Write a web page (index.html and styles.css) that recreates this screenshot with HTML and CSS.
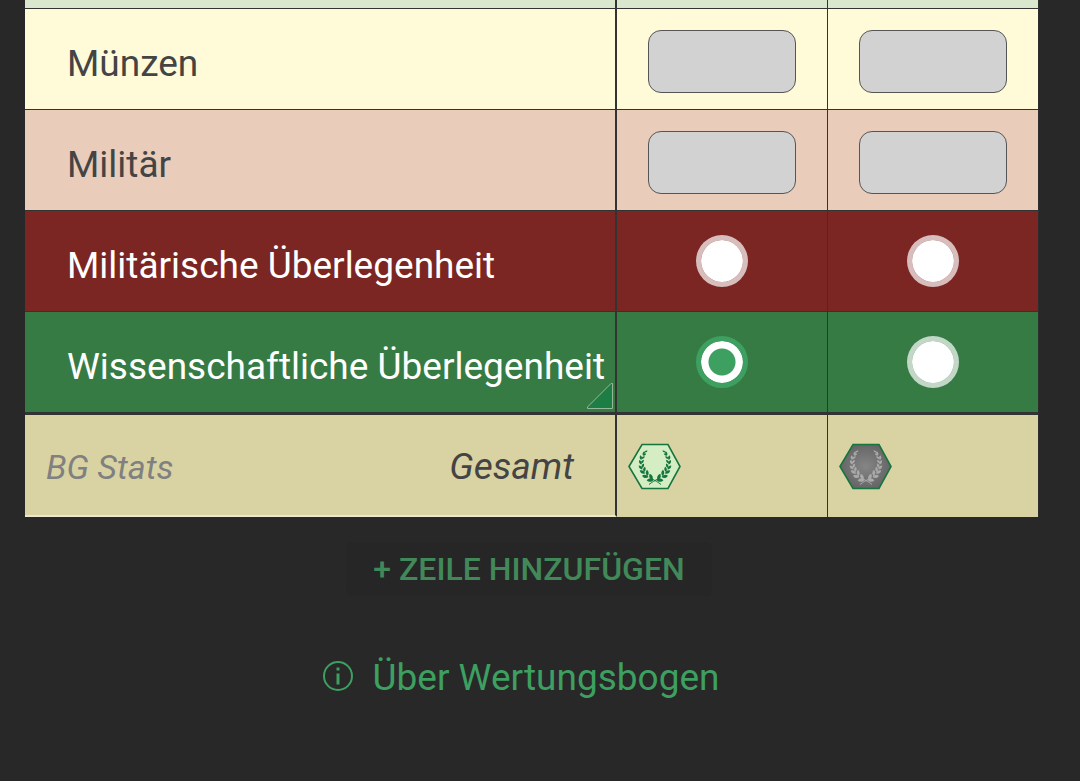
FILE: index.html
```html
<!DOCTYPE html>
<html lang="de">
<head>
<meta charset="utf-8">
<meta name="viewport" content="width=device-width, initial-scale=1">
<title>Wertungsbogen</title>
<link rel="stylesheet" href="styles.css">
</head>
<body>
<svg class="defs" aria-hidden="true">
  <defs>
    <path id="leaf" d="M0 0C-2-1.800-2-4.200 0-6C1.800-4.200 1.800-1.800 0 0Z"/>
    <g id="branch">
      <path class="stem" d="M33 41.500C30 39 27 37.500 24 36"/>
      <use href="#leaf" transform="translate(24.500 37) rotate(-24) scale(1.150)"/>
      <use href="#leaf" transform="translate(25.500 37) rotate(-92) scale(1.150)"/>
      <use href="#leaf" transform="translate(19.500 33) rotate(-4) scale(1.050)"/>
      <use href="#leaf" transform="translate(20.500 34) rotate(-78) scale(1.100)"/>
      <use href="#leaf" transform="translate(16 29) rotate(10) scale(.9)"/>
      <use href="#leaf" transform="translate(17 30.500) rotate(-60)"/>
      <use href="#leaf" transform="translate(14 25) rotate(22) scale(.8)"/>
      <use href="#leaf" transform="translate(14.500 26.500) rotate(-44) scale(.9)"/>
      <use href="#leaf" transform="translate(13.200 20.500) rotate(35) scale(.75)"/>
      <use href="#leaf" transform="translate(13.500 21.500) rotate(-26) scale(.85)"/>
      <use href="#leaf" transform="translate(13.500 16) rotate(50) scale(.7)"/>
      <use href="#leaf" transform="translate(13.200 17) rotate(-8) scale(.8)"/>
      <use href="#leaf" transform="translate(15 12.500) rotate(62) scale(.6)"/>
      <use href="#leaf" transform="translate(15 12.500) rotate(20) scale(.75)"/>
      <use href="#leaf" transform="translate(16.500 9.500) rotate(58) scale(.6)"/>
    </g>
    <symbol id="laurel" viewBox="0 0 54 47">
      <path class="hex" stroke-width="1.600" d="M1 23.500L14 1.500H40L52 23.500L40 45.500H14Z"/>
      <use href="#branch"/>
      <use href="#branch" transform="translate(54 0) scale(-1 1)"/>
    </symbol>
    <radialGradient id="shade"><stop offset="0" stop-color="#858585"/><stop offset="1" stop-color="#666"/></radialGradient>
  </defs>
</svg>

<main class="page">
  <table class="sheet">
    <colgroup><col><col class="player"><col class="player"></colgroup>
    <tbody>
      <tr class="previous"><td></td><td></td><td></td></tr>
      <tr class="row coins">
        <th scope="row" id="coins">Münzen</th>
        <td><input class="score" type="text" aria-labelledby="coins"></td>
        <td><input class="score" type="text" aria-labelledby="coins"></td>
      </tr>
      <tr class="row military">
        <th scope="row" id="military">Militär</th>
        <td><input class="score" type="text" aria-labelledby="military"></td>
        <td><input class="score" type="text" aria-labelledby="military"></td>
      </tr>
      <tr class="row supremacy-military">
        <th scope="row" id="sup-military">Militärische Überlegenheit</th>
        <td><input class="pick" type="radio" name="supremacy-military" aria-labelledby="sup-military"></td>
        <td><input class="pick" type="radio" name="supremacy-military" aria-labelledby="sup-military"></td>
      </tr>
      <tr class="row supremacy-science">
        <th scope="row" id="sup-science">Wissenschaftliche Überlegenheit
          <svg class="corner" viewBox="0 0 27 27" aria-hidden="true"><path d="M.5 25.500V24L24 .5H25.500V25.500Z"/></svg>
        </th>
        <td><input class="pick" type="radio" name="supremacy-science" aria-labelledby="sup-science" checked></td>
        <td><input class="pick" type="radio" name="supremacy-science" aria-labelledby="sup-science"></td>
      </tr>
    </tbody>
    <tfoot>
      <tr class="total">
        <th scope="row"><div class="total-label"><span class="brand">BG Stats</span><span>Gesamt</span></div></th>
        <td><svg class="laurel won" role="img" aria-label="Sieg"><use href="#laurel"/></svg></td>
        <td><svg class="laurel lost" role="img" aria-label="Kein Sieg"><use href="#laurel"/></svg></td>
      </tr>
    </tfoot>
  </table>

  <div class="actions">
    <button class="add" type="button">+ ZEILE HINZUFÜGEN</button>
    <a class="about" href="#">
      <svg class="info" viewBox="0 0 30 30" aria-hidden="true"><circle cx="15" cy="15" r="14"/><path d="M15 12.500V23.500M15 6.500V9.500"/></svg>
      Über Wertungsbogen
    </a>
  </div>
</main>
</body>
</html>
```

FILE: styles.css
```css
* { box-sizing: border-box; }

body {
  margin: 0;
  background: #282828;
  font-family: Roboto, "Noto Sans", sans-serif;
  font-size: 37px;
  line-height: 44px;
  color: #444;
}

.defs { position: absolute; width: 0; height: 0; }

.page { padding: 0 41px 0 25px; }

.sheet {
  width: 100%;
  table-layout: fixed;
  border-collapse: separate;
  border-spacing: 0;
}

.player { width: 211px; }

.sheet th,
.sheet td {
  padding: 0;
  border-bottom: 1px solid #333;
  border-right: 1px solid #333;
  vertical-align: middle;
  text-align: center;
}

.sheet th,
.sheet .previous td:first-child { border-right-width: 2px; }

.sheet th {
  position: relative;
  padding-left: 42px;
  text-align: left;
  font-weight: 400;
  white-space: nowrap;
}

.previous td { height: 9px; background: #dae7cf; }

.row th,
.row td { height: 101px; }

.sheet .row th { padding-top: 10px; }

.coins { background: #fffad7; }
.military { background: #eaccba; }
.supremacy-military { background: #7b2622; color: #fff; }
.supremacy-science { background: #367b44; color: #fff; }

.sheet .supremacy-science th,
.sheet .supremacy-science td { height: 103px; border-bottom: 3px solid #333; }

.score {
  display: block;
  width: 148px;
  height: 63px;
  margin: 4px auto 0;
  padding: 0 12px;
  border: 1px solid #555;
  border-radius: 13px;
  background: #d2d2d2;
  font: inherit;
  color: #333;
  text-align: center;
}

.pick {
  appearance: none;
  display: block;
  width: 52px;
  height: 52px;
  margin: 0 auto;
  border: 5px solid rgb(255 255 255 / 70%);
  border-radius: 50%;
  background: #fff;
  background-clip: padding-box;
}

.pick:checked {
  border-color: #3d9f60;
  background: radial-gradient(circle, #3d9f60 13px, #fff 14px) padding-box;
}

.corner {
  position: absolute;
  right: 1px;
  bottom: 2px;
  width: 27px;
  height: 27px;
  fill: #1c7d45;
  stroke: #95b996;
}

.total { background: #d9d3a3; }

.sheet .total th,
.sheet .total td { height: 102px; border-bottom: 0; }

.sheet .total th {
  padding: 0 41px 0 21px;
  border-bottom: 2px solid #ece8cb;
  font-style: italic;
}

.sheet .total td { padding-left: 11px; text-align: left; }

.sheet td:last-child { border-right-color: #2e2e2e; }

.total-label {
  display: flex;
  align-items: center;
  justify-content: space-between;
  padding-top: 4px;
}

.brand { font-size: 34px; color: #808080; }

.laurel { display: block; width: 54px; height: 47px; }
.hex { stroke: #16753f; }
.stem { fill: none; stroke: currentColor; stroke-width: 1px; }
#leaf { fill: currentColor; stroke: none; }
.won { color: #16753f; fill: #d5edc3; }
.lost { color: #aaa; fill: url(#shade); }

.actions {
  display: flex;
  flex-direction: column;
  align-items: center;
  gap: 60px;
  padding: 25px 6px 60px 0;
}

.add {
  height: 54px;
  padding: 0 27px;
  border: 0;
  border-radius: 6px;
  background: #262626;
  font: 500 32px/54px Roboto, "Noto Sans", sans-serif;
  color: #42895a;
}

.about {
  display: flex;
  align-items: center;
  gap: 20px;
  padding-right: 16px;
  color: #3d9f60;
  text-decoration: none;
}

.info {
  width: 30px;
  height: 30px;
  margin-bottom: 4px;
  fill: none;
  stroke: currentColor;
  stroke-width: 2px;
}

.info path { stroke-width: 3px; }
```
